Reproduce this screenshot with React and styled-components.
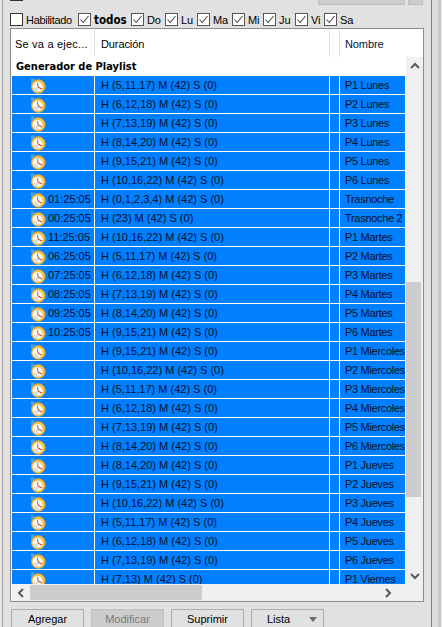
import React from "react";
import styled, { createGlobalStyle } from "styled-components";

const Global = createGlobalStyle`
  html, body { margin: 0; padding: 0; height: 627px; overflow: hidden; background: #e1e1e1; }
  #root { height: 627px; }
`;

const Page = styled.div`
  width: 442px; height: 627px; overflow: hidden; display: flex;
  font-family: "Liberation Sans", Arial, sans-serif; font-size: 11px; color: #000;
  background: #e1e1e1;
`;
const LeftGutter = styled.div`width: 2px; flex: none; background: #e6e6e6;`;
const Panel = styled.main`
  width: 430px; flex: none; box-sizing: border-box; height: 627px; overflow: hidden;
  border-left: 1px solid #a0a0a0; border-right: 1px solid #808080;
  padding-left: 7px; display: flex; flex-direction: column;
`;
const RightStrip = styled.div`
  flex: 1; display: flex;
  background: #e8e8e8;
`;
const StripPart = styled.div`
  width: ${p => p.$w}px; background: ${p => p.$bg};
`;
const TopBar = styled.div`display: flex; height: 5px; width: 414px;`;
const TopStub = styled.div`
  width: 13px; height: 1px; background: #333;
  margin-right: 295px;
`;
const TopButton = styled.div`
  width: ${p => p.$w}px; height: 5px; box-sizing: border-box; background: #cccccc;
  border: 1px solid #bfbfbf; border-top: 0; margin-right: ${p => p.$mr || 0}px;
`;
const FilterRow = styled.div`
  margin-top: 8px; height: 13px; display: flex; align-items: center;
`;
const Check = styled.label`
  display: flex; align-items: center; width: ${p => p.$w}px; flex: none; white-space: nowrap;
  letter-spacing: ${p => (p.$bold ? 0 : p.$ls || "-0.1px")};
  font-family: ${p => (p.$bold ? '"DejaVu Sans Condensed", "DejaVu Sans", sans-serif' : "inherit")};
  font-size: ${p => (p.$bold ? "11.5px" : "inherit")};
  font-weight: ${p => (p.$bold ? 700 : 400)};
`;
const Box = styled.span`
  width: 13px; height: 13px; box-sizing: border-box; border: 1px solid ${p => (p.$on ? "#555" : "#333")}; background: #fff;
  margin-right: 3px; flex: none; display: block;
  svg { display: block; }
`;
const Table = styled.section`
  margin-top: 2px; width: 414px; height: 574px; box-sizing: border-box; background: #fff;
  border: 1px solid #8c8c8c; padding-left: 1px; display: grid;
  grid-template-columns: 394px 17px; grid-template-rows: 28px 527px 17px;
`;
const ColumnGrid = styled.div`
  display: grid; grid-template-columns: 82px 234px 9px 65px; column-gap: 1px;
`;
const Header = styled(ColumnGrid)`
  grid-column: 1 / 3; grid-template-columns: 82px 234px 9px 80px; padding-top: 1px; background: #fff;
`;
const HeadCell = styled.div`
  border-right: 1px solid #e3e3e3; margin-right: -1px; padding-left: ${p => p.$pl}px;
  display: flex; align-items: center; white-space: nowrap; overflow: hidden;
  letter-spacing: ${p => p.$ls || "-0.1px"};
  color: ${p => p.$c || "#000"};
  &:last-child { border-right: 0; }
`;
const Body = styled.div`overflow: hidden; display: flex; flex-direction: column;`;
const SectionTitle = styled.div`
  height: 19px; flex: none; font-family: "DejaVu Sans Condensed", "DejaVu Sans", sans-serif; font-size: 11px;
  font-weight: 700; padding-left: 4px; display: flex; align-items: center; white-space: nowrap;
`;
const Row = styled(ColumnGrid)`height: 18px; flex: none; margin-bottom: 1px;`;
const Cell = styled.div`
  background: #007fff; color: #00102a; display: flex; align-items: center; white-space: nowrap; overflow: hidden;
  padding-left: ${p => p.$pl || 0}px;
  letter-spacing: ${p => p.$ls || 0};
`;
const ClockSvg = styled.svg`flex: none; margin-top: 2px; display: block;`;
const Time = styled.span`margin-left: 2px;`;
const VScroll = styled.div`
  background: #f0f0f0; display: flex; flex-direction: column; align-items: stretch;
`;
const VArrow = styled.div`
  height: 17px; flex: none; display: flex; align-items: center; justify-content: center;
  margin-top: ${p => (p.$end ? "auto" : 0)};
`;
const VThumb = styled.div`
  width: 15px; height: 215px; background: #cdcdcd; margin-top: 208px;
`;
const HScroll = styled.div`
  grid-column: 1 / 3; background: #f0f0f0; display: flex; align-items: center;
`;
const HArrow = styled.div`
  width: 17px; height: 17px; flex: none; display: flex; align-items: center; justify-content: center;
  margin-left: ${p => (p.$end ? "177px" : 0)};
`;
const HThumb = styled.div`width: 172px; height: 15px; background: #cdcdcd; margin-left: 1px;`;
const Buttons = styled.div`display: flex; margin-top: 7px; margin-left: 1px; gap: 7px;`;
const Button = styled.div`
  width: ${p => p.$w || 73}px; height: 24px; box-sizing: border-box; flex: none;
  border: 1px solid ${p => (p.$disabled ? "#bfbfbf" : "#adadad")};
  background: ${p => (p.$disabled ? "#cccccc" : "#e1e1e1")};
  color: ${p => (p.$disabled ? "#7a7a7a" : "#000")};
  display: flex; align-items: flex-start; justify-content: center; padding-top: 3px; position: relative;
  padding-right: ${p => p.$pr || 0}px;
`;
const Caret = styled.span`
  position: absolute; right: 6px; top: 7px; width: 0; height: 0;
  border-left: 4px solid transparent; border-right: 4px solid transparent; border-top: 5px solid #6d6d6d;
`;

const Tick = () => (
  <svg width="11" height="11" viewBox="0 0 11 11"><path d="M1.5 5.5 L4.2 8.5 L9.5 2" fill="none" stroke="#4a4a4a" strokeWidth="1.1" /></svg>
);
const Clock = () => (
  <ClockSvg width="16" height="16" viewBox="0 0 16 16">
    <path d="M0.5 0.5 L5 0.5 L4 3 L1.5 5.5 Z" fill="#4aa3e0" />
    <circle cx="8.3" cy="8.5" r="6.8" fill="#f7c646" stroke="#eda52a" strokeWidth="1" />
    <circle cx="7.6" cy="9" r="5" fill="#fbfaf6" />
    <path d="M2.8 10 A5 5 0 0 0 8.5 14 L 8 9.5 Z" fill="#e2dfd6" />
    <path d="M7.4 4.8 L8 9" stroke="#7b8496" strokeWidth="1.1" fill="none" />
    <path d="M8 9 L11.8 11" stroke="#d8403a" strokeWidth="1.1" fill="none" />
  </ClockSvg>
);
const Chevron = ({ dir }) => {
  const d = { up: "M1 6 L5 2 L9 6", down: "M1 2 L5 6 L9 2", left: "M6 1 L2 5 L6 9", right: "M2 1 L6 5 L2 9" }[dir];
  const horizontal = dir === "left" || dir === "right";
  return (
    <svg width={horizontal ? 8 : 10} height={horizontal ? 10 : 8} viewBox={horizontal ? "0 0 8 10" : "0 0 10 8"}>
      <path d={d} fill="none" stroke="#5a5a5a" strokeWidth="2" />
    </svg>
  );
};

const days = [["Do", 34], ["Lu", 32], ["Ma", 35], ["Mi", 31], ["Ju", 32], ["Vi", 29], ["Sa", 30]];
const rows = [
  ["", "H (5,11,17) M (42) S (0)", "P1 Lunes"],
  ["", "H (6,12,18) M (42) S (0)", "P2 Lunes"],
  ["", "H (7,13,19) M (42) S (0)", "P3 Lunes"],
  ["", "H (8,14,20) M (42) S (0)", "P4 Lunes"],
  ["", "H (9,15,21) M (42) S (0)", "P5 Lunes"],
  ["", "H (10,16,22) M (42) S (0)", "P6 Lunes"],
  ["01:25:05", "H (0,1,2,3,4) M (42) S (0)", "Trasnoche"],
  ["00:25:05", "H (23) M (42) S (0)", "Trasnoche 2"],
  ["11:25:05", "H (10,16,22) M (42) S (0)", "P1 Martes"],
  ["06:25:05", "H (5,11,17) M (42) S (0)", "P2 Martes"],
  ["07:25:05", "H (6,12,18) M (42) S (0)", "P3 Martes"],
  ["08:25:05", "H (7,13,19) M (42) S (0)", "P4 Martes"],
  ["09:25:05", "H (8,14,20) M (42) S (0)", "P5 Martes"],
  ["10:25:05", "H (9,15,21) M (42) S (0)", "P6 Martes"],
  ["", "H (9,15,21) M (42) S (0)", "P1 Miercoles"],
  ["", "H (10,16,22) M (42) S (0)", "P2 Miercoles"],
  ["", "H (5,11,17) M (42) S (0)", "P3 Miercoles"],
  ["", "H (6,12,18) M (42) S (0)", "P4 Miercoles"],
  ["", "H (7,13,19) M (42) S (0)", "P5 Miercoles"],
  ["", "H (8,14,20) M (42) S (0)", "P6 Miercoles"],
  ["", "H (8,14,20) M (42) S (0)", "P1 Jueves"],
  ["", "H (9,15,21) M (42) S (0)", "P2 Jueves"],
  ["", "H (10,16,22) M (42) S (0)", "P3 Jueves"],
  ["", "H (5,11,17) M (42) S (0)", "P4 Jueves"],
  ["", "H (6,12,18) M (42) S (0)", "P5 Jueves"],
  ["", "H (7,13,19) M (42) S (0)", "P6 Jueves"],
  ["", "H (7,13) M (42) S (0)", "P1 Viernes"],
];

export default function App() {
  return (
    <Page>
      <Global />
      <LeftGutter />
      <Panel>
        <TopBar>
          <TopStub />
          <TopButton $w={87} $mr={3} />
          <TopButton $w={15} />
        </TopBar>
        <FilterRow>
          <Check $w={68} $ls="-0.3px"><Box />Habilitado</Check>
          <Check $w={53} $bold><Box $on><Tick /></Box>todos</Check>
          {days.map(([d, w]) => (
            <Check key={d} $w={w}><Box $on><Tick /></Box>{d}</Check>
          ))}
        </FilterRow>
        <Table>
          <Header>
            <HeadCell $pl={3} $ls="0.2px">Se va a ejec...</HeadCell>
            <HeadCell $pl={6}>Duración</HeadCell>
            <HeadCell />
            <HeadCell $pl={5} $c="#001040">Nombre</HeadCell>
          </Header>
          <Body>
            <SectionTitle>Generador de Playlist</SectionTitle>
            {rows.map(([t, d, n], i) => (
              <Row key={i}>
                <Cell $pl={18}><Clock />{t && <Time>{t}</Time>}</Cell>
                <Cell $pl={6}>{d}</Cell>
                <Cell />
                <Cell $pl={5} $ls="-0.3px">{n}</Cell>
              </Row>
            ))}
          </Body>
          <VScroll>
            <VArrow><Chevron dir="up" /></VArrow>
            <VThumb />
            <VArrow $end><Chevron dir="down" /></VArrow>
          </VScroll>
          <HScroll>
            <HArrow><Chevron dir="left" /></HArrow>
            <HThumb />
            <HArrow $end><Chevron dir="right" /></HArrow>
          </HScroll>
        </Table>
        <Buttons>
          <Button>Agregar</Button>
          <Button $disabled>Modificar</Button>
          <Button>Suprimir</Button>
          <Button $pr={18}>Lista<Caret /></Button>
        </Buttons>
      </Panel>
      <RightStrip>
        <StripPart $w={6} $bg="#dcdcdc" />
        <StripPart $w={3} $bg="#c9c9c9" />
      </RightStrip>
    </Page>
  );
}
